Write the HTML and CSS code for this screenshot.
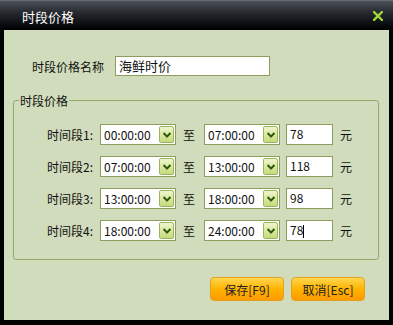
FILE: index.html
```html
<!DOCTYPE html>
<html lang="zh-CN">
<head>
    <meta charset="UTF-8">
    <title>时段价格</title>
    <link rel="stylesheet" href="styles.css">
</head>
<body>
    <div class="window">
        <!-- Title bar -->
        <div class="titlebar">
            <span class="title">时段价格</span>
            <span class="close">
                <svg width="10" height="10" viewBox="0 0 10 10"><path d="M1 1 L9 9 M9 1 L1 9" stroke="#a4d63a" stroke-width="2.4" stroke-linecap="square"/></svg>
            </span>
        </div>

        <div class="content">
            <div class="name-row">
                <label class="name-label">时段价格名称</label>
                <div class="text-box name-box">海鲜时价</div>
            </div>

            <fieldset class="periods">
                <legend>时段价格</legend>

                <div class="period-row">
                    <span class="period-label">时间段1:</span>
                    <div class="combo"><span class="combo-text">00:00:00</span><span class="combo-btn"><svg width="10" height="8" viewBox="0 0 10 8"><path d="M1.5 2 L5 5.5 L8.5 2" fill="none" stroke="#2f5a10" stroke-width="2"/></svg></span></div>
                    <span class="to">至</span>
                    <div class="combo"><span class="combo-text">07:00:00</span><span class="combo-btn"><svg width="10" height="8" viewBox="0 0 10 8"><path d="M1.5 2 L5 5.5 L8.5 2" fill="none" stroke="#2f5a10" stroke-width="2"/></svg></span></div>
                    <div class="text-box price">78</div>
                    <span class="unit">元</span>
                </div>

                <div class="period-row">
                    <span class="period-label">时间段2:</span>
                    <div class="combo"><span class="combo-text">07:00:00</span><span class="combo-btn"><svg width="10" height="8" viewBox="0 0 10 8"><path d="M1.5 2 L5 5.5 L8.5 2" fill="none" stroke="#2f5a10" stroke-width="2"/></svg></span></div>
                    <span class="to">至</span>
                    <div class="combo"><span class="combo-text">13:00:00</span><span class="combo-btn"><svg width="10" height="8" viewBox="0 0 10 8"><path d="M1.5 2 L5 5.5 L8.5 2" fill="none" stroke="#2f5a10" stroke-width="2"/></svg></span></div>
                    <div class="text-box price">118</div>
                    <span class="unit">元</span>
                </div>

                <div class="period-row">
                    <span class="period-label">时间段3:</span>
                    <div class="combo"><span class="combo-text">13:00:00</span><span class="combo-btn"><svg width="10" height="8" viewBox="0 0 10 8"><path d="M1.5 2 L5 5.5 L8.5 2" fill="none" stroke="#2f5a10" stroke-width="2"/></svg></span></div>
                    <span class="to">至</span>
                    <div class="combo"><span class="combo-text">18:00:00</span><span class="combo-btn"><svg width="10" height="8" viewBox="0 0 10 8"><path d="M1.5 2 L5 5.5 L8.5 2" fill="none" stroke="#2f5a10" stroke-width="2"/></svg></span></div>
                    <div class="text-box price">98</div>
                    <span class="unit">元</span>
                </div>

                <div class="period-row">
                    <span class="period-label">时间段4:</span>
                    <div class="combo"><span class="combo-text">18:00:00</span><span class="combo-btn"><svg width="10" height="8" viewBox="0 0 10 8"><path d="M1.5 2 L5 5.5 L8.5 2" fill="none" stroke="#2f5a10" stroke-width="2"/></svg></span></div>
                    <span class="to">至</span>
                    <div class="combo"><span class="combo-text">24:00:00</span><span class="combo-btn"><svg width="10" height="8" viewBox="0 0 10 8"><path d="M1.5 2 L5 5.5 L8.5 2" fill="none" stroke="#2f5a10" stroke-width="2"/></svg></span></div>
                    <div class="text-box price">78<span class="caret"></span></div>
                    <span class="unit">元</span>
                </div>
            </fieldset>

            <!-- Buttons -->
            <div class="actions">
                <button class="btn">保存[F9]</button>
                <button class="btn">取消[Esc]</button>
            </div>
        </div>
    </div>
</body>
</html>
```

FILE: styles.css
```css
:root {
    --color-panel: #d0dcbb;
    --color-line: #97a866;
    --color-box-border: #8d9e5c;
    --color-text: #111;
}

html, body {
    margin: 0;
    padding: 0;
    background: #000;
}

body {
    font-family: "Noto Sans CJK SC", "DejaVu Sans", sans-serif;
    font-size: 12px;
    color: var(--color-text);
}

.window {
    width: 393px;
    height: 325px;
    background: #000;
    display: flex;
    flex-direction: column;
}

/* Title bar */
.titlebar {
    height: 30px;
    flex: none;
    display: flex;
    align-items: center;
    justify-content: space-between;
    padding: 0 10px 0 22px;
    background: linear-gradient(#4c5158 0%, #2a2e34 35%, #0a0c10 80%, #000 100%);
    border-top: 1px solid #6a6e74;
    box-sizing: border-box;
}

.title {
    color: #fff;
    font-size: 13px;
    padding-top: 1px;
}

.close {
    display: flex;
    align-items: center;
}

/* Content */
.content {
    height: 290px;
    margin: 0 4px;
    background: var(--color-panel);
    box-sizing: border-box;
    padding-top: 26px;
}

.name-row {
    display: flex;
    align-items: center;
    height: 20px;
    padding-left: 28px;
}

.name-label {
    width: 83px;
}

.text-box {
    background: #fff;
    border: 1px solid var(--color-box-border);
    box-sizing: border-box;
    height: 21px;
    line-height: 19px;
    padding-left: 3px;
    white-space: nowrap;
}

.name-box {
    width: 155px;
    height: 20px;
    line-height: 18px;
    font-size: 13px;
}

/* Period fieldset */
.periods {
    margin: 16px 10px 0 9px;
    padding: 15px 0 18px 33px;
    border: 1px solid var(--color-line);
    border-radius: 3px;
    display: flex;
    flex-direction: column;
    gap: 11px;
}

.periods legend {
    padding: 0 1px;
    margin-left: -28px;
    font-size: 12px;
}

.period-row {
    display: flex;
    align-items: center;
    height: 21px;
}

.period-label {
    width: 53px;
}

.combo {
    width: 76px;
    height: 21px;
    background: #fff;
    border: 1px solid var(--color-box-border);
    box-sizing: border-box;
    display: flex;
    align-items: center;
    justify-content: space-between;
    padding: 0 1px 0 3px;
}

.combo-text {
    font-size: 12px;
}

.combo-btn {
    width: 15px;
    height: 17px;
    border-radius: 2px;
    border: 1px solid #9ab45a;
    box-sizing: border-box;
    background: linear-gradient(#eef5c8, #c4dc7c);
    display: flex;
    align-items: center;
    justify-content: center;
}

.to {
    margin: 0 9px 0 7px;
}

.price {
    width: 47px;
    margin-left: 6px;
    line-height: 15px;
    padding-top: 1px;
}

.caret {
    display: inline-block;
    width: 1px;
    height: 13px;
    background: #000;
    vertical-align: middle;
}

.unit {
    margin-left: 7px;
}

/* Buttons */
.actions {
    display: flex;
    justify-content: flex-end;
    gap: 7px;
    margin: 17px 24px 0 0;
}

.btn {
    width: 74px;
    height: 24px;
    border: 1px solid #e6a020;
    border-radius: 4px;
    background: linear-gradient(#ffd650 0%, #ffb400 50%, #ff9a00 100%);
    font-family: "Noto Sans CJK SC", "DejaVu Sans Mono", monospace;
    font-size: 12px;
    color: #222;
    padding: 0;
}
```
